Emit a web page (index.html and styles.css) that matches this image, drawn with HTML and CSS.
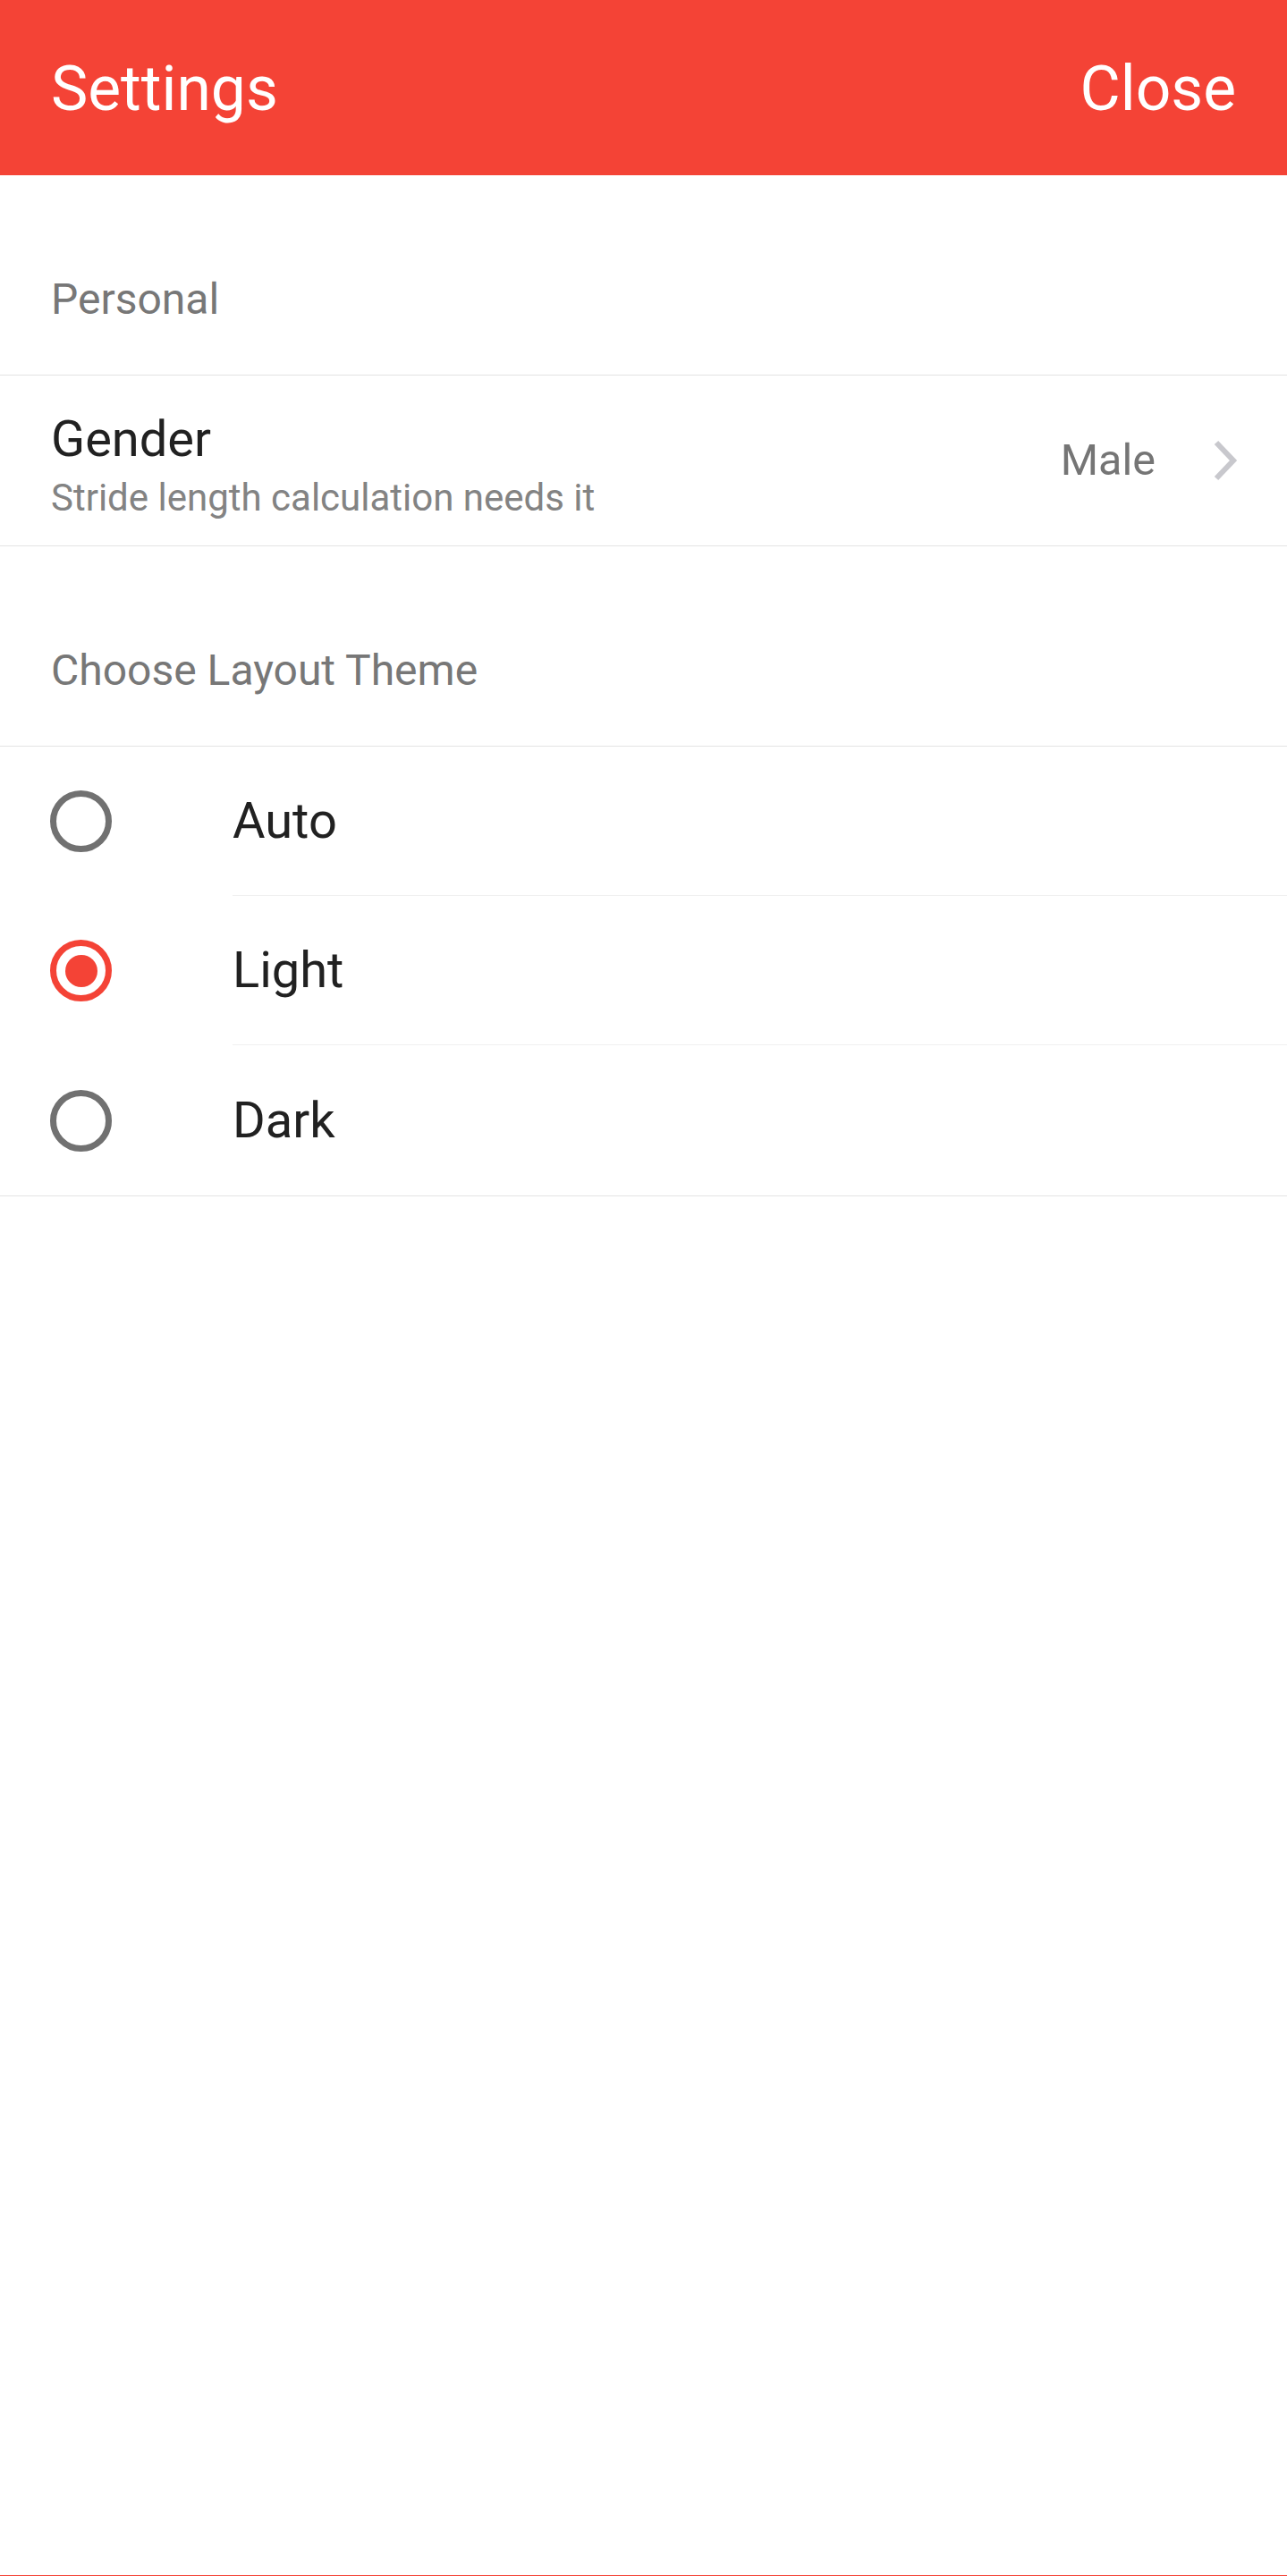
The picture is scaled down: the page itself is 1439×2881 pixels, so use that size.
FILE: index.html
```html
<!DOCTYPE html>
<html lang="en">
<head>
<meta charset="utf-8">
<title>Settings</title>
<link rel="stylesheet" href="styles.css">
</head>
<body>
<div class="page">
  <header class="topbar">
    <span class="topbar-title">Settings</span>
    <span class="topbar-action">Close</span>
  </header>

  <div class="section-header">Personal</div>
  <div class="nav-row">
    <div class="nav-text">
      <div class="nav-title">Gender</div>
      <div class="nav-sub">Stride length calculation needs it</div>
    </div>
    <div class="nav-value">Male</div>
    <svg class="chevron" width="28" height="46" viewBox="0 0 28 46" aria-hidden="true">
      <polyline points="4,3 23,23 4,43" fill="none" stroke="#c8c8cd" stroke-width="6" stroke-linejoin="miter"/>
    </svg>
  </div>

  <div class="section-header">Choose Layout Theme</div>
  <div class="radio-list">
    <div class="radio-row">
      <span class="radio"></span>
      <span class="radio-label">Auto</span>
    </div>
    <div class="radio-row">
      <span class="radio checked"></span>
      <span class="radio-label">Light</span>
    </div>
    <div class="radio-row last">
      <span class="radio"></span>
      <span class="radio-label">Dark</span>
    </div>
  </div>

  <div class="spacer"></div>
  <div class="bottom-line"></div>
</div>
</body>
</html>
```

FILE: styles.css
```css
* { box-sizing: border-box; }

html, body {
  margin: 0;
  padding: 0;
  background: #ffffff;
  font-family: Roboto, "Noto Sans", "Liberation Sans", sans-serif;
}

.page {
  min-height: 2881px;
  display: flex;
  flex-direction: column;
}

.topbar {
  height: 196px;
  background: #f44336;
  color: #ffffff;
  display: flex;
  align-items: center;
  justify-content: space-between;
  padding: 4px 57px 0 57px;
  font-size: 69.5px;
  line-height: 80px;
}

.section-header {
  padding: 111px 57px 56px 57px;
  font-size: 48px;
  line-height: 56px;
  color: #777777;
  border-bottom: 1px solid #e3e3e3;
}

.nav-row {
  display: flex;
  align-items: center;
  padding: 38px 57px 28px 57px;
  border-bottom: 1px solid #e3e3e3;
}

.nav-text {
  flex: 1;
}

.nav-title {
  font-size: 56px;
  line-height: 66px;
  color: #212121;
}

.nav-sub {
  margin-top: 8px;
  font-size: 42px;
  line-height: 50px;
  color: #838383;
}

.nav-value {
  font-size: 48.5px;
  line-height: 56px;
  color: #757575;
  margin-right: 64px;
  margin-top: -10px;
}

.chevron {
  display: block;
  margin-top: -10px;
  margin-right: -2px;
}

.radio-list {
  border-bottom: 1px solid #e3e3e3;
}

.radio-row {
  display: flex;
  align-items: stretch;
  height: 167px;
}

.radio-row.last {
  height: 168px;
}

.radio {
  flex: 0 0 auto;
  align-self: center;
  width: 69px;
  height: 69px;
  margin: 0 135px 0 56px;
  border: 7px solid #717171;
  border-radius: 50%;
  display: flex;
  align-items: center;
  justify-content: center;
}

.radio.checked {
  border-color: #f44336;
}

.radio.checked::after {
  content: "";
  width: 36px;
  height: 36px;
  border-radius: 50%;
  background: #f44336;
}

.radio-label {
  flex: 1;
  display: flex;
  align-items: center;
  font-size: 56px;
  color: #212121;
  border-bottom: 1px solid #f0f0f0;
}

.radio-row.last .radio-label {
  border-bottom: none;
}

.spacer {
  flex: 1;
}

.bottom-line {
  height: 1px;
  background: #f44336;
}
```
